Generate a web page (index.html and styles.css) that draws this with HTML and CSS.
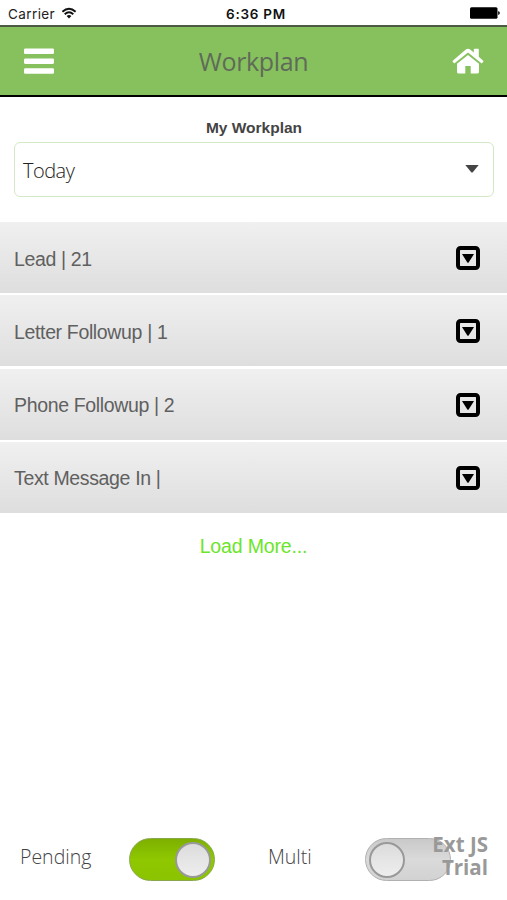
FILE: index.html
```
<!DOCTYPE html>
<html lang="en">
<head>
    <meta charset="UTF-8">
    <meta name="viewport" content="width=device-width, initial-scale=1.0">
    <title>Workplan</title>
    <link rel="stylesheet" href="styles.css">
</head>
<body>
    <div class="status-bar">
        <div class="carrier">
            <span>Carrier</span>
            <svg class="wifi" viewBox="0 0 16 12" width="16" height="12">
                <path d="M1.4 4.7 Q8 -1.3 14.6 4.7" fill="none" stroke="#111" stroke-width="1.9"/>
                <path d="M3.7 7.3 Q8 3.3 12.3 7.3" fill="none" stroke="#111" stroke-width="1.9"/>
                <path d="M5.6 9.1 Q8 7 10.4 9.1 L8 11.6 Z" fill="#111"/>
            </svg>
        </div>
        <span class="time">6:36 PM</span>
        <svg class="battery" viewBox="0 0 30 12" width="30" height="12">
            <rect x="0" y="0.3" width="27.5" height="11.4" rx="1.5" fill="#000"/>
            <path d="M28.2 4 Q29.8 4.4 29.8 6 Q29.8 7.6 28.2 8 Z" fill="#000"/>
        </svg>
    </div>

    <header class="header">
        <svg viewBox="0 0 30 26" width="30" height="26" fill="#fff">
            <rect x="0" y="0.5" width="30" height="5.5" rx="1.3"/>
            <rect x="0" y="10.4" width="30" height="5.5" rx="1.3"/>
            <rect x="0" y="20.2" width="30" height="5.5" rx="1.3"/>
        </svg>
        <h1>Workplan</h1>
        <svg viewBox="0 0 32 26" width="32" height="26" fill="#fff">
            <path d="M16 7 L27 15.8 V24 Q27 25.4 25.7 25.4 H18.7 V18 H13.3 V25.4 H6.3 Q5 25.4 5 24 V15.8 Z"/>
            <path d="M0.8 12.8 L13.8 1.6 Q16 0 18.2 1.6 L21.8 4.6 V1.4 Q21.8 0.7 22.5 0.7 H26.1 Q26.8 0.7 26.8 1.4 V8.8 L31.2 12.8 Q31.7 13.3 31.3 13.8 L30.2 15 Q29.7 15.5 29.1 15 L16 4.6 L2.9 15 Q2.3 15.5 1.8 15 L0.7 13.8 Q0.3 13.3 0.8 12.8 Z"/>
        </svg>
    </header>

    <main class="content">
        <div class="field">
            <div class="field-label">My Workplan</div>
            <div class="select">
                <span>Today</span>
                <svg viewBox="0 0 14 8" width="14" height="8"><path d="M0.3 0 H13.7 L8 7 Q7 8 6 7 Z" fill="#444"/></svg>
            </div>
        </div>

        <div class="list">
            <div class="row">
                <span>Lead | 21</span>
                <svg viewBox="0 0 24 24" width="24" height="24"><rect x="2" y="2" width="20" height="20" rx="2.5" fill="none" stroke="#000" stroke-width="4"/><path d="M6 8 H18 L12.8 16.3 Q12 17.3 11.2 16.3 Z"/></svg>
            </div>
            <div class="row">
                <span>Letter Followup | 1</span>
                <svg viewBox="0 0 24 24" width="24" height="24"><rect x="2" y="2" width="20" height="20" rx="2.5" fill="none" stroke="#000" stroke-width="4"/><path d="M6 8 H18 L12.8 16.3 Q12 17.3 11.2 16.3 Z"/></svg>
            </div>
            <div class="row">
                <span>Phone Followup | 2</span>
                <svg viewBox="0 0 24 24" width="24" height="24"><rect x="2" y="2" width="20" height="20" rx="2.5" fill="none" stroke="#000" stroke-width="4"/><path d="M6 8 H18 L12.8 16.3 Q12 17.3 11.2 16.3 Z"/></svg>
            </div>
            <div class="row">
                <span>Text Message In |</span>
                <svg viewBox="0 0 24 24" width="24" height="24"><rect x="2" y="2" width="20" height="20" rx="2.5" fill="none" stroke="#000" stroke-width="4"/><path d="M6 8 H18 L12.8 16.3 Q12 17.3 11.2 16.3 Z"/></svg>
            </div>
        </div>
        <div class="load-more"><span>Load More...</span></div>
    </main>

    <footer class="footer">
        <span class="toggle-label">Pending</span>
        <div class="toggle on"><div class="thumb"></div></div>
        <span class="toggle-label">Multi</span>
        <div class="toggle"><div class="thumb"></div></div>
    </footer>

    <div class="watermark">Ext JS<br>Trial</div>
</body>
</html>
```
FILE: styles.css
```
:root {
    --green: #87c15e;
    --toggle-green: #8fc800;
    --text: #606060;
}

* {
    box-sizing: border-box;
}

body {
    margin: 0;
    height: 900px;
    display: flex;
    flex-direction: column;
    position: relative;
    overflow: hidden;
    background: #fff;
    color: var(--text);
    font-family: "Liberation Sans", Arial, sans-serif;
}

svg {
    display: block;
    flex: none;
}

.status-bar {
    height: 25px;
    padding: 2px 7px 0 8px;
    display: grid;
    grid-template-columns: 218px 1fr 30px;
    align-items: center;
    font-family: Inter, sans-serif;
    font-size: 13.5px;
    color: #222;
}

.carrier {
    display: flex;
    align-items: center;
    gap: 6px;
    letter-spacing: 0.4px;
}

.wifi {
    margin-top: -2px;
}

.time {
    font-weight: 600;
    color: #111;
    letter-spacing: 0.75px;
}

.battery {
    margin-top: -1px;
}

.header {
    height: 72px;
    padding: 0 23px 0 24px;
    display: flex;
    align-items: center;
    justify-content: space-between;
    background: var(--green);
    border-top: 2px solid #4c5a43;
    border-bottom: 2px solid #000;
}

.header h1 {
    margin: 0 0 0 1px;
    font: 400 25px/34px "Open Sans", sans-serif;
    letter-spacing: -0.35px;
    color: #5f6b58;
}

.content {
    flex: 1;
}

.field {
    padding: 21px 13px 25px 14px;
}

.field-label {
    height: 24px;
    line-height: 19px;
    text-align: center;
    font-size: 15.5px;
    font-weight: bold;
    color: #444;
}

.select {
    height: 55px;
    padding: 2px 14px 0 8px;
    display: flex;
    align-items: center;
    justify-content: space-between;
    border: 1.5px solid #d3e8c4;
    border-radius: 6px;
    font: 300 20px "Open Sans", sans-serif;
    letter-spacing: -0.5px;
    color: #222;
}

.select svg {
    margin-top: -3px;
}

.list {
    display: grid;
    grid-template-rows: repeat(4, 71px);
    gap: 2.3px;
}

.row {
    padding: 1px 27px 0 14px;
    display: flex;
    align-items: center;
    justify-content: space-between;
    background: linear-gradient(#f0f0f0, #dedede);
    font-size: 19.5px;
    letter-spacing: -0.35px;
}

.row span {
    padding-top: 2px;
}

.load-more {
    padding-top: 21px;
    text-align: center;
    font-size: 19.5px;
    line-height: 24px;
    letter-spacing: -0.15px;
    color: #6be52b;
}

.footer {
    height: 81px;
    padding: 0 20px 1px;
    display: grid;
    grid-template-columns: 109px 139px 97px 87px;
    align-items: center;
    font: 300 19.5px "Open Sans", sans-serif;
    color: #444;
}

.toggle-label {
    margin-top: -5px;
}

.toggle {
    width: 86px;
    height: 43px;
    padding: 3px;
    display: flex;
    border: 1px solid #b0b0b0;
    border-radius: 22px;
    background: linear-gradient(#c9c9c9, #dadada 50%, #d2d2d2);
}

.toggle.on {
    justify-content: flex-end;
    border-color: #8aa64d;
    background: linear-gradient(#7db000, var(--toggle-green) 50%, #8bc400);
}

.thumb {
    width: 36px;
    height: 36px;
    border: 2px solid #999;
    border-radius: 50%;
    background: linear-gradient(#dcdcdc, #eee);
}

.watermark {
    position: absolute;
    right: 19px;
    top: 833px;
    text-align: right;
    font: 700 20.5px/23px "Open Sans", sans-serif;
    color: #999;
}
```
